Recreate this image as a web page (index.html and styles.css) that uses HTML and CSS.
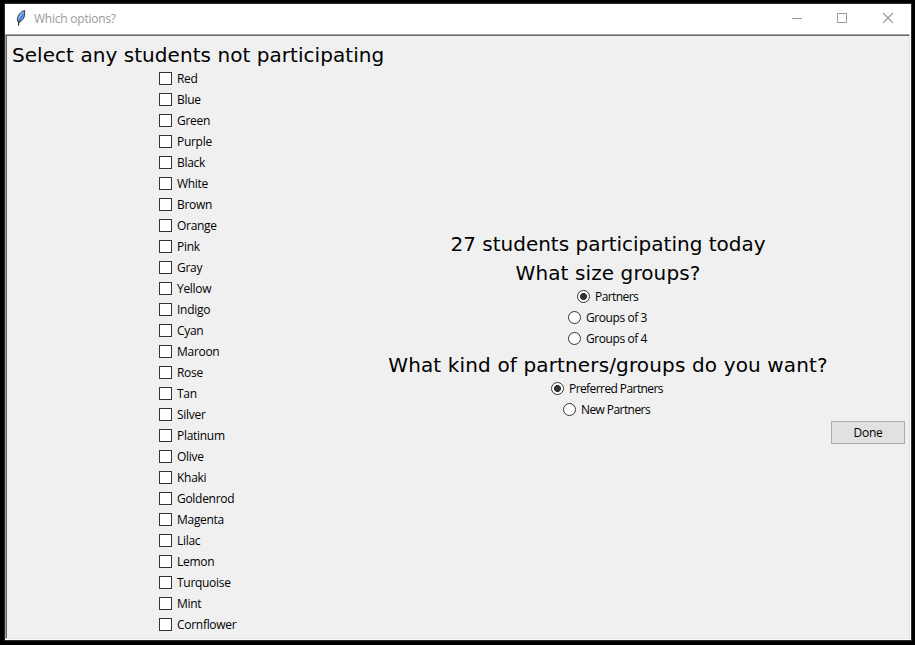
FILE: index.html
```
<!DOCTYPE html>
<html lang="en">
<head>
<meta charset="utf-8">
<title>Which options?</title>
<link rel="stylesheet" href="styles.css">
</head>
<body>
<div class="window">
  <header class="titlebar">
    <svg class="feather" width="12" height="18" viewBox="0 0 12 18">
      <path d="M9.500 1.500C6 2.500 2.500 6 2.300 11l1.200 2.300c4-1 7-5 6-11.800z" fill="#5c9ae6" stroke="#2a2d35" stroke-width="0.900"/>
      <path d="M8 3C6 5 4.500 7 4 9.500" fill="none" stroke="#a9d0fa" stroke-width="1"/>
      <path d="M4 12L3.500 16.500" fill="none" stroke="#111" stroke-width="1.100"/>
      <path d="M7.500 6.500C6 8.500 4.800 10.500 4 13" fill="none" stroke="#234a80" stroke-width="0.600"/>
    </svg>
    <span class="title">Which options?</span>
    <svg class="controls" width="102" height="12" viewBox="0 0 102 12" fill="none" stroke="#999">
      <path d="M0 6.500h10"/>
      <path d="M45.500 1.500h9v9h-9z"/>
      <path d="M91 1l10 10M101 1l-10 10" stroke-width="1.100"/>
    </svg>
  </header>
  <main class="client">
    <section class="students">
      <h1 class="heading h-select">Select any students not participating</h1>
      <div class="list">
        <label class="row"><i class="check"></i><span>Red</span></label>
        <label class="row"><i class="check"></i><span>Blue</span></label>
        <label class="row"><i class="check"></i><span>Green</span></label>
        <label class="row"><i class="check"></i><span>Purple</span></label>
        <label class="row"><i class="check"></i><span>Black</span></label>
        <label class="row"><i class="check"></i><span>White</span></label>
        <label class="row"><i class="check"></i><span>Brown</span></label>
        <label class="row"><i class="check"></i><span>Orange</span></label>
        <label class="row"><i class="check"></i><span>Pink</span></label>
        <label class="row"><i class="check"></i><span>Gray</span></label>
        <label class="row"><i class="check"></i><span>Yellow</span></label>
        <label class="row"><i class="check"></i><span>Indigo</span></label>
        <label class="row"><i class="check"></i><span>Cyan</span></label>
        <label class="row"><i class="check"></i><span>Maroon</span></label>
        <label class="row"><i class="check"></i><span>Rose</span></label>
        <label class="row"><i class="check"></i><span>Tan</span></label>
        <label class="row"><i class="check"></i><span>Silver</span></label>
        <label class="row"><i class="check"></i><span>Platinum</span></label>
        <label class="row"><i class="check"></i><span>Olive</span></label>
        <label class="row"><i class="check"></i><span>Khaki</span></label>
        <label class="row"><i class="check"></i><span>Goldenrod</span></label>
        <label class="row"><i class="check"></i><span>Magenta</span></label>
        <label class="row"><i class="check"></i><span>Lilac</span></label>
        <label class="row"><i class="check"></i><span>Lemon</span></label>
        <label class="row"><i class="check"></i><span>Turquoise</span></label>
        <label class="row"><i class="check"></i><span>Mint</span></label>
        <label class="row"><i class="check"></i><span>Cornflower</span></label>
      </div>
    </section>
    <section class="options">
      <h2 class="heading">27 students participating today</h2>
      <h2 class="heading h-size">What size groups?</h2>
      <label class="row w-partners"><i class="radio on"></i><span>Partners</span></label>
      <label class="row w-groups"><i class="radio"></i><span>Groups of 3</span></label>
      <label class="row w-groups"><i class="radio"></i><span>Groups of 4</span></label>
      <h2 class="heading h-kind">What kind of partners/groups do you want?</h2>
      <label class="row w-preferred"><i class="radio on"></i><span>Preferred Partners</span></label>
      <label class="row w-new"><i class="radio"></i><span>New Partners</span></label>
    </section>
    <button class="done">Done</button>
  </main>
</div>
</body>
</html>
```
FILE: styles.css
```
* { box-sizing: border-box; }
body {
  margin: 0;
  width: 915px;
  height: 645px;
  padding: 3px 3px 4px 4px;
  background: #000;
  color: #000;
  font: 12px/21px "Open Sans", "Noto Sans", sans-serif;
  overflow: hidden;
}
.window {
  width: 908px;
  height: 638px;
  border: 1px solid #2b2b2b;
  background: #fff;
}
.titlebar {
  display: flex;
  align-items: center;
  height: 30px;
  padding: 0 17px 0 10px;
}
.feather { margin-top: -2px; }
.title {
  margin: -2px 0 0 7px;
  color: #999;
  letter-spacing: -0.23px;
}
.controls { margin: -2px 0 0 auto; }
.client {
  display: flex;
  width: 905px;
  height: 605px;
  padding: 1px 0 0 6px;
  background: #f0f0f0;
  border: 1px solid;
  border-color: #a0a0a0 #e3e3e3 #e3e3e3 #a0a0a0;
  box-shadow: inset 1px 1px 0 #696969;
}
.students {
  flex: none;
  width: 372px;
  padding-top: 3px;
}
.heading {
  margin: 0;
  height: 29px;
  font: 20px/33px "DejaVu Sans", sans-serif;
  white-space: nowrap;
}
.h-select { letter-spacing: 0.05px; }
.h-size { letter-spacing: 0.1px; }
.h-kind { letter-spacing: 0.14px; }
.list { margin-left: 147px; }
.row {
  display: flex;
  align-items: center;
  height: 21px;
  gap: 5px;
  letter-spacing: -0.29px;
  white-space: nowrap;
}
.check {
  flex: none;
  width: 13px;
  height: 13px;
  border: 1px solid #333;
  background: #fff;
}
.radio {
  flex: none;
  width: 13px;
  height: 13px;
  border: 1px solid #333;
  border-radius: 50%;
  background: #fff;
}
.radio.on { background: radial-gradient(circle, #333 3.200px, #fff 3.800px); }
.options {
  flex: none;
  display: flex;
  flex-direction: column;
  align-items: center;
  width: 440px;
  margin-left: 4px;
  padding-top: 192px;
}
.options .row { letter-spacing: -0.58px; }
.options .w-groups { letter-spacing: -0.42px; }
.w-partners { width: 62px; }
.w-groups { width: 80px; }
.w-preferred { width: 114px; }
.w-new { width: 90px; }
.done {
  flex: none;
  width: 74px;
  height: 23px;
  margin: 385px 0 0 3px;
  padding: 0;
  border: 1px solid #adadad;
  background: #e1e1e1;
  color: #000;
  font: 12px/21px "Open Sans", sans-serif;
  letter-spacing: -0.3px;
}
```
